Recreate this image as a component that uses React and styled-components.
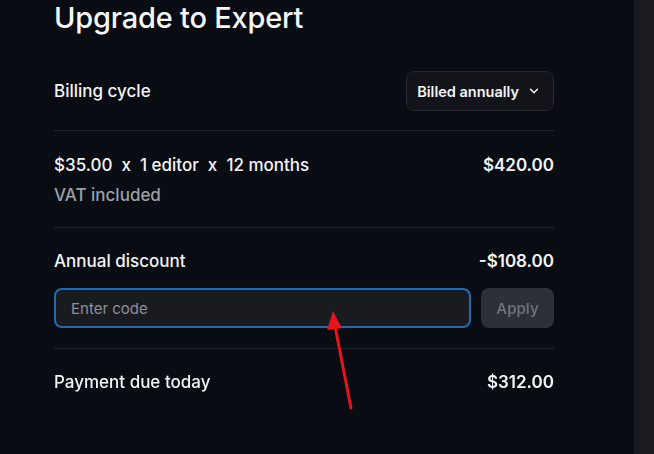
import React from 'react'
import styled, { createGlobalStyle } from 'styled-components'

const Global = createGlobalStyle`
  html, body {
    margin: 0;
    padding: 0;
    background: #0a0c13;
    font-family: Inter, "Noto Sans", sans-serif;
    color: #f3f4f6;
  }
`

function App() {
  return (
    <Page>
      <Global />
      <Main>
        <Content>
          <Title>Upgrade to Expert</Title>

          <Section pad="35px 0 19px">
            <Row>
              <Label>Billing cycle</Label>
              <Select>
                Billed annually
                <svg width="14" height="14" viewBox="0 0 24 24" fill="none"
                  stroke="currentColor" strokeWidth="2.5" strokeLinecap="round" strokeLinejoin="round">
                  <path d="M6 9l6 6 6-6" />
                </svg>
              </Select>
            </Row>
          </Section>

          <Section pad="19px 0 17px">
            <Row>
              <Label>$35.00&nbsp; x&nbsp; 1 editor&nbsp; x&nbsp; 12 months</Label>
              <Amount>$420.00</Amount>
            </Row>
            <Label muted>VAT included</Label>
          </Section>

          <Section pad="18px 0 20px">
            <Row>
              <Label>Annual discount</Label>
              <Amount>-$108.00</Amount>
            </Row>
            <CodeRow>
              <CodeInput placeholder="Enter code" autoFocus />
              <ApplyButton>Apply</ApplyButton>
            </CodeRow>
          </Section>

          <Section pad="18px 0 0" last>
            <Row>
              <Label>Payment due today</Label>
              <Amount>$312.00</Amount>
            </Row>
          </Section>
        </Content>

        <Arrow width="40" height="110" viewBox="0 0 40 110">
          <line x1="29" y1="104" x2="13" y2="22" stroke="#e4151c" strokeWidth="3" strokeLinecap="round" />
          <polygon points="11,7 20,24 5,26" fill="#e4151c" />
        </Arrow>
      </Main>
      <Side />
    </Page>
  )
}

const Page = styled.div`
  display: flex;
  height: 454px;
  overflow: hidden;
`

const Main = styled.div`
  position: relative;
  width: 634px;
  flex-shrink: 0;
  padding-left: 54px;
  box-sizing: border-box;
`

const Side = styled.div`
  flex: 1;
  border-left: 4px solid #171920;
  background: #1b1c20;
`

const Content = styled.div`
  width: 500px;
`

const Title = styled.h1`
  margin: 0;
  font-size: 29px;
  font-weight: 500;
  line-height: 36px;
  color: #f5f6f8;
  letter-spacing: -0.2px;
`

const Section = styled.div`
  padding: ${p => p.pad};
  border-bottom: ${p => (p.last ? 'none' : '1px solid #1f2128')};
`

const Row = styled.div`
  display: flex;
  align-items: center;
  justify-content: space-between;
`

const Label = styled.div`
  font-size: 17px;
  line-height: 30px;
  font-weight: 500;
  color: ${p => (p.muted ? '#9ca0a8' : '#f3f4f6')};
`

const Amount = styled.div`
  font-size: 17px;
  line-height: 30px;
  font-weight: 600;
  color: #f3f4f6;
`

const Select = styled.div`
  display: flex;
  align-items: center;
  gap: 8px;
  height: 40px;
  box-sizing: border-box;
  padding: 0 12px 0 10px;
  border: 1px solid #262830;
  border-radius: 8px;
  background: #12141a;
  font-size: 14.5px;
  font-weight: 600;
  color: #f3f4f6;
`

const CodeRow = styled.div`
  display: flex;
  gap: 10px;
  margin-top: 12px;
`

const CodeInput = styled.input`
  flex: 1;
  height: 40px;
  box-sizing: border-box;
  padding: 0 15px;
  border: 2px solid #1d6db5;
  border-radius: 8px;
  background: #1a1b20;
  color: #f3f4f6;
  caret-color: #f3f4f6;
  font-family: inherit;
  font-size: 15px;
  outline: none;
  &::placeholder {
    color: #8e9199;
  }
`

const ApplyButton = styled.button`
  width: 73px;
  height: 40px;
  border: none;
  border-radius: 8px;
  background: #2d3038;
  color: #6c7079;
  font-family: inherit;
  font-size: 15px;
  font-weight: 600;
`

const Arrow = styled.svg`
  position: absolute;
  left: 322px;
  top: 304px;
`

export default App
